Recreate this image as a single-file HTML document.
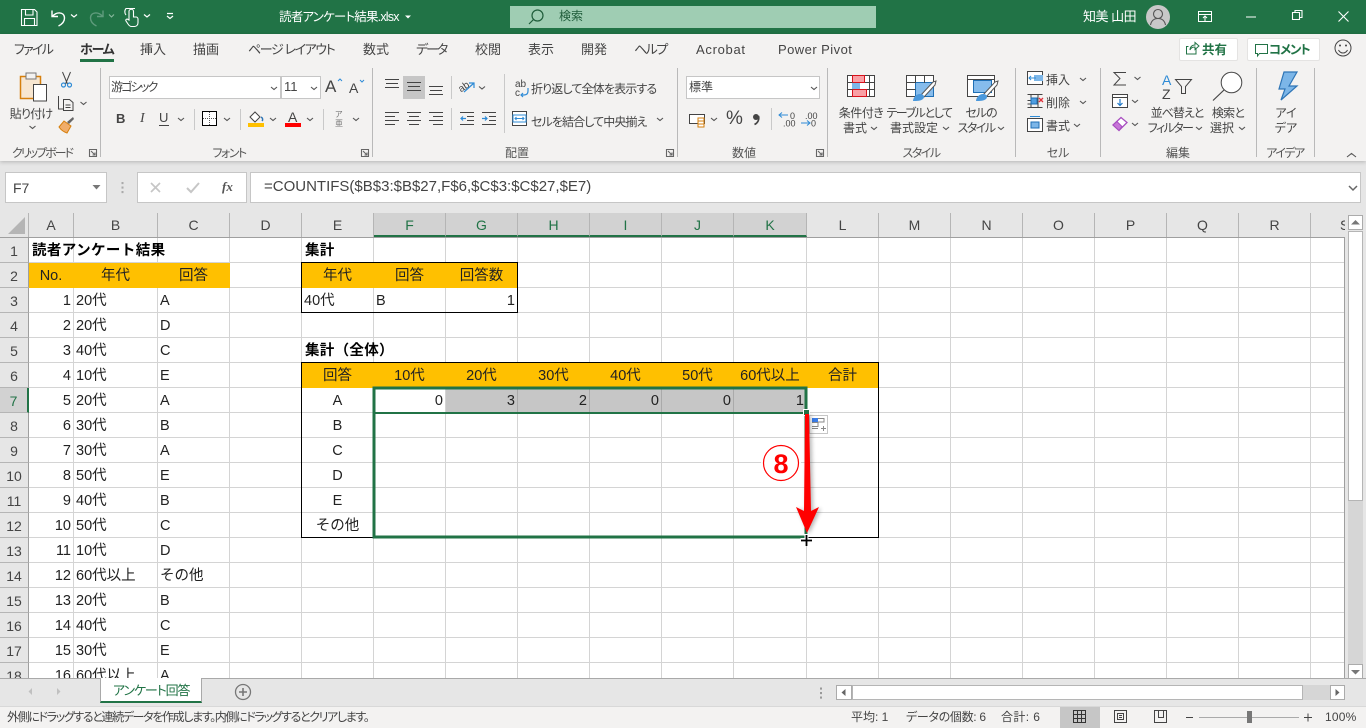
<!DOCTYPE html>
<html lang="ja"><head><meta charset="utf-8"><title>読者アンケート結果.xlsx</title>
<style>
*{box-sizing:border-box;margin:0;padding:0}
html,body{width:1366px;height:728px;overflow:hidden;background:#e6e6e6}
body{position:relative;font-family:"Liberation Sans","Noto Sans CJK JP",sans-serif;color:#444}
.a{position:absolute}
.t{position:absolute;white-space:nowrap;font-size:12px;line-height:16px;font-feature-settings:"palt";color:#444}
.m{text-align:center;transform:translateX(-50%)}
.w{color:#fff}
.tab{font-size:13px;top:42px}
.lab{top:145px;font-size:12px;color:#555}
.rl{font-size:12px;line-height:15px;text-align:center;transform:translateX(-50%)}
.ch{position:absolute;top:213px;height:24px;font-size:14px;line-height:25px;text-align:center;color:#444;background:#e6e6e6;border-right:1px solid #b5b5b5}
.sel{background:#d2d2d2;border-bottom:2px solid #217346;color:#217346}
.rh{position:absolute;left:0;width:29px;height:25px;font-size:14px;line-height:27px;text-align:center;color:#444;background:#e6e6e6;border-bottom:1px solid #b5b5b5;border-right:1px solid #9f9f9f}
.c{position:absolute;height:24px;font-style:normal;font-size:14.5px;line-height:27px;white-space:nowrap;color:#222;padding:0 2px}
.R{text-align:right}.C{text-align:center;padding:0}.B{font-weight:700;color:#000}
.ca{left:29px;width:44px}.cb{left:74px;width:83px}.cc{left:158px;width:71px}
.ce{left:302px;width:71px}.cf{left:374px;width:71px}.cg{left:446px;width:71px}.ch2{left:518px;width:71px}
.ci{left:590px;width:71px}.cj{left:662px;width:71px}.ck{left:734px;width:72px}.cl{left:807px;width:71px}
.r1{top:238px}.r2{top:263px}.r3{top:288px}.r4{top:313px}.r5{top:338px}.r6{top:363px}.r7{top:388px}.r8{top:413px}.r9{top:438px}.r10{top:463px}.r11{top:488px}.r12{top:513px}.r13{top:538px}.r14{top:563px}.r15{top:588px}.r16{top:613px}.r17{top:638px}.r18{top:663px}
.st{top:709px;font-size:12px;color:#444}
</style></head><body>

<!-- title bar -->
<div class="a" style="left:0;top:0;width:1366px;height:34px;background:#217346"></div>
<div class="a" style="left:510px;top:6px;width:366px;height:22px;background:#9fcdb3"></div>
<span class="t" style="left:559px;top:8px;color:#1f5c3a;font-size:12px">検索</span>
<span class="t w" style="left:279px;top:9px;font-size:12.5px;color:#fff;letter-spacing:-.8px">読者アンケート結果.xlsx</span>
<span class="t" style="left:1083px;top:9px;color:#fff;font-size:13px;letter-spacing:-.5px">知美 山田</span>

<!-- ribbon -->
<div class="a" style="left:0;top:34px;width:1366px;height:127px;background:#f3f2f1;box-shadow:0 1px 4px rgba(0,0,0,.22)"></div>
<span class="t tab" style="left:14px;letter-spacing:-1.7px">ファイル</span>
<span class="t tab" style="left:80px;font-weight:700;color:#333;letter-spacing:-1.2px">ホーム</span>
<span class="t tab" style="left:140px">挿入</span>
<span class="t tab" style="left:193px">描画</span>
<span class="t tab" style="left:248px;letter-spacing:-1.4px">ページ レイアウト</span>
<span class="t tab" style="left:363px">数式</span>
<span class="t tab" style="left:416px;letter-spacing:-2px">データ</span>
<span class="t tab" style="left:475px">校閲</span>
<span class="t tab" style="left:528px">表示</span>
<span class="t tab" style="left:581px">開発</span>
<span class="t tab" style="left:634px;letter-spacing:-1.5px">ヘルプ</span>
<span class="t tab" style="left:696px;letter-spacing:.7px">Acrobat</span>
<span class="t tab" style="left:778px;letter-spacing:.45px">Power Pivot</span>
<div class="a" style="left:80px;top:59px;width:34px;height:3px;background:#217346"></div>

<div class="a" style="left:1179px;top:38px;width:59px;height:23px;background:#fff;border:1px solid #e4e3e2;border-radius:2px"></div>
<span class="t" style="left:1202px;top:42px;font-weight:700;color:#217346;font-size:12.5px">共有</span>
<div class="a" style="left:1247px;top:38px;width:73px;height:23px;background:#fff;border:1px solid #e4e3e2;border-radius:2px"></div>
<span class="t" style="left:1269px;top:42px;font-weight:700;color:#217346;font-size:12.5px;letter-spacing:-1.2px">コメント</span>

<!-- font boxes -->
<div class="a" style="left:109px;top:76px;width:172px;height:23px;background:#fff;border:1px solid #c6c6c6"></div>
<div class="a" style="left:281px;top:76px;width:40px;height:23px;background:#fff;border:1px solid #c6c6c6"></div>
<span class="t" style="left:111px;top:79px;font-size:12px;color:#444;letter-spacing:-1.8px">游ゴシック</span>
<span class="t" style="left:284px;top:79px;font-size:13px;color:#444">11</span>
<div class="a" style="left:403px;top:76px;width:22px;height:23px;background:#c6c6c6"></div>
<div class="a" style="left:686px;top:76px;width:134px;height:23px;background:#fff;border:1px solid #c6c6c6"></div>
<span class="t" style="left:689px;top:79px;font-size:12px">標準</span>

<span class="t" style="left:116px;top:111px;font-weight:700;font-size:13px;color:#444">B</span>
<span class="t" style="left:140px;top:111px;font-style:italic;font-family:'Liberation Serif',serif;font-size:14px;color:#444">I</span>
<span class="t" style="left:159px;top:110px;font-size:13px;color:#444">U</span>
<span class="t" style="left:288px;top:109px;font-size:14px;color:#444">A</span>
<span class="t" style="left:325px;top:77px;font-size:17px;line-height:20px;color:#444">A</span>
<span class="t" style="left:349px;top:80px;font-size:14px;color:#444">A</span>
<span class="t" style="left:335px;top:110px;font-size:8px;line-height:9px;color:#777">ア<br>亜</span>
<span class="t" style="left:726px;top:109px;font-size:19px;line-height:20px;color:#444">%</span>
<span class="t" style="left:531px;top:81px;font-size:12px;letter-spacing:-.85px">折り返して全体を表示する</span>
<span class="t" style="left:531px;top:114px;font-size:12px;letter-spacing:-.9px">セルを結合して中央揃え</span>
<span class="t" style="left:1046px;top:72px;font-size:12px">挿入</span>
<span class="t" style="left:1046px;top:95px;font-size:12px">削除</span>
<span class="t" style="left:1046px;top:118px;font-size:12px">書式</span>

<span class="t rl" style="left:31px;top:107px;letter-spacing:-.8px">貼り付け</span>
<span class="t rl" style="left:861px;top:106px;letter-spacing:-.5px">条件付き</span>
<span class="t rl" style="left:855px;top:121px">書式</span>
<span class="t rl" style="left:919px;top:106px;letter-spacing:-1.4px">テーブルとして</span>
<span class="t rl" style="left:914px;top:121px">書式設定</span>
<span class="t rl" style="left:981px;top:106px;letter-spacing:-1px">セルの</span>
<span class="t rl" style="left:976px;top:121px;letter-spacing:-1.5px">スタイル</span>
<span class="t rl" style="left:1177px;top:106px;letter-spacing:-1px">並べ替えと</span>
<span class="t rl" style="left:1170px;top:121px;letter-spacing:-1.6px">フィルター</span>
<span class="t rl" style="left:1228px;top:106px;letter-spacing:-.8px">検索と</span>
<span class="t rl" style="left:1222px;top:121px">選択</span>
<span class="t rl" style="left:1286px;top:106px">アイ</span>
<span class="t rl" style="left:1286px;top:121px">デア</span>

<span class="t lab m" style="left:42px;letter-spacing:-2px">クリップボード</span>
<span class="t lab m" style="left:229px;letter-spacing:-1.5px">フォント</span>
<span class="t lab m" style="left:517px">配置</span>
<span class="t lab m" style="left:744px">数値</span>
<span class="t lab m" style="left:921px;letter-spacing:-1.5px">スタイル</span>
<span class="t lab m" style="left:1058px">セル</span>
<span class="t lab m" style="left:1178px">編集</span>
<span class="t lab m" style="left:1285px;letter-spacing:-1.5px">アイデア</span>

<!-- formula bar -->
<div class="a" style="left:5px;top:172px;width:102px;height:31px;background:#fff;border:1px solid #c6c6c6"></div>
<span class="t" style="left:13px;top:180px;font-size:14px;color:#444">F7</span>
<div class="a" style="left:137px;top:172px;width:110px;height:31px;background:#fff;border:1px solid #c6c6c6"></div>
<div class="a" style="left:250px;top:172px;width:1111px;height:31px;background:#fff;border:1px solid #c6c6c6"></div>
<span class="t" style="left:222px;top:179px;font-family:'Liberation Serif',serif;font-style:italic;font-weight:700;font-size:13px;color:#555">fx</span>
<span class="t" style="left:264px;top:179px;font-size:15px;color:#444">=COUNTIFS($B$3:$B$27,F$6,$C$3:$C$27,$E7)</span>

<!-- headers -->
<div class="ch" style="left:0;width:29px"></div>
<div class="ch" style="left:29px;width:45px">A</div>
<div class="ch" style="left:74px;width:84px">B</div>
<div class="ch" style="left:158px;width:72px">C</div>
<div class="ch" style="left:230px;width:72px">D</div>
<div class="ch" style="left:302px;width:72px">E</div>
<div class="ch sel" style="left:374px;width:72px">F</div>
<div class="ch sel" style="left:446px;width:72px">G</div>
<div class="ch sel" style="left:518px;width:72px">H</div>
<div class="ch sel" style="left:590px;width:72px">I</div>
<div class="ch sel" style="left:662px;width:72px">J</div>
<div class="ch sel" style="left:734px;width:73px">K</div>
<div class="ch" style="left:807px;width:72px">L</div>
<div class="ch" style="left:879px;width:72px">M</div>
<div class="ch" style="left:951px;width:72px">N</div>
<div class="ch" style="left:1023px;width:72px">O</div>
<div class="ch" style="left:1095px;width:72px">P</div>
<div class="ch" style="left:1167px;width:72px">Q</div>
<div class="ch" style="left:1239px;width:72px">R</div>
<div class="ch" style="left:1311px;width:34px;border-right:0;overflow:hidden;text-align:left;padding-left:29px">S</div>

<!-- grid -->
<div class="a" style="left:0;top:237px;width:1345px;height:441px;overflow:hidden;background:#fff;border-top:1px solid #9f9f9f;border-right:1px solid #9f9f9f">
<div class="rh" style="top:0">1</div><div class="rh" style="top:25px">2</div><div class="rh" style="top:50px">3</div><div class="rh" style="top:75px">4</div><div class="rh" style="top:100px">5</div><div class="rh" style="top:125px">6</div><div class="rh" style="top:150px;background:#d2d2d2;color:#217346;border-right:2px solid #217346">7</div><div class="rh" style="top:175px">8</div><div class="rh" style="top:200px">9</div><div class="rh" style="top:225px">10</div><div class="rh" style="top:250px">11</div><div class="rh" style="top:275px">12</div><div class="rh" style="top:300px">13</div><div class="rh" style="top:325px">14</div><div class="rh" style="top:350px">15</div><div class="rh" style="top:375px">16</div><div class="rh" style="top:400px">17</div><div class="rh" style="top:425px">18</div>
</div>
<svg class="a" style="left:0;top:0" width="1366" height="678" viewBox="0 0 1366 678">
<path fill="none" stroke="#d4d4d4" d="M29 262.500H1344M29 287.500H1344M29 312.500H1344M29 337.500H1344M29 362.500H1344M29 387.500H1344M29 412.500H1344M29 437.500H1344M29 462.500H1344M29 487.500H1344M29 512.500H1344M29 537.500H1344M29 562.500H1344M29 587.500H1344M29 612.500H1344M29 637.500H1344M29 662.500H1344M73.500 238V678M157.500 238V678M229.500 238V678M301.500 238V678M373.500 238V678M445.500 238V678M517.500 238V678M589.500 238V678M661.500 238V678M733.500 238V678M806.500 238V678M878.500 238V678M950.500 238V678M1022.500 238V678M1094.500 238V678M1166.500 238V678M1238.500 238V678M1310.500 238V678"/>
<rect x="29" y="263" width="201" height="25" fill="#ffc000"/>
<rect x="302" y="263" width="216" height="25" fill="#ffc000"/>
<rect x="302" y="363" width="577" height="25" fill="#ffc000"/>
<rect x="446" y="388" width="360" height="24" fill="#c6c6c6"/>
<path stroke="#aaa" d="M517.500 388V412M589.500 388V412M661.500 388V412M733.500 388V412"/>
<rect x="301.500" y="262.500" width="216" height="50" fill="none" stroke="#000"/>
<rect x="301.500" y="362.500" width="577" height="175" fill="none" stroke="#000"/>
</svg>

<i class="c ca r1 B" style="width:130px;font-size:14.5px;letter-spacing:.4px;padding-left:3px">読者アンケート結果</i>
<i class="c ca r2 C">No.</i><i class="c cb r2 C">年代</i><i class="c cc r2 C">回答</i>
<i class="c ca r3 R">1</i><i class="c cb r3">20代</i><i class="c cc r3">A</i>
<i class="c ca r4 R">2</i><i class="c cb r4">20代</i><i class="c cc r4">D</i>
<i class="c ca r5 R">3</i><i class="c cb r5">40代</i><i class="c cc r5">C</i>
<i class="c ca r6 R">4</i><i class="c cb r6">10代</i><i class="c cc r6">E</i>
<i class="c ca r7 R">5</i><i class="c cb r7">20代</i><i class="c cc r7">A</i>
<i class="c ca r8 R">6</i><i class="c cb r8">30代</i><i class="c cc r8">B</i>
<i class="c ca r9 R">7</i><i class="c cb r9">30代</i><i class="c cc r9">A</i>
<i class="c ca r10 R">8</i><i class="c cb r10">50代</i><i class="c cc r10">E</i>
<i class="c ca r11 R">9</i><i class="c cb r11">40代</i><i class="c cc r11">B</i>
<i class="c ca r12 R">10</i><i class="c cb r12">50代</i><i class="c cc r12">C</i>
<i class="c ca r13 R">11</i><i class="c cb r13">10代</i><i class="c cc r13">D</i>
<i class="c ca r14 R">12</i><i class="c cb r14">60代以上</i><i class="c cc r14">その他</i>
<i class="c ca r15 R">13</i><i class="c cb r15">20代</i><i class="c cc r15">B</i>
<i class="c ca r16 R">14</i><i class="c cb r16">40代</i><i class="c cc r16">C</i>
<i class="c ca r17 R">15</i><i class="c cb r17">30代</i><i class="c cc r17">E</i>
<i class="c ca r18 R" style="height:15px;overflow:hidden">16</i><i class="c cb r18" style="height:15px;overflow:hidden">60代以上</i><i class="c cc r18" style="height:15px;overflow:hidden">A</i>

<i class="c ce r1 B" style="width:60px;letter-spacing:.3px;padding-left:3px">集計</i>
<i class="c ce r2 C">年代</i><i class="c cf r2 C">回答</i><i class="c cg r2 C">回答数</i>
<i class="c ce r3">40代</i><i class="c cf r3">B</i><i class="c cg r3 R">1</i>
<i class="c ce r5 B" style="width:100px;letter-spacing:.3px;padding-left:3px">集計（全体）</i>
<i class="c ce r6 C">回答</i><i class="c cf r6 C">10代</i><i class="c cg r6 C">20代</i><i class="c ch2 r6 C">30代</i><i class="c ci r6 C">40代</i><i class="c cj r6 C">50代</i><i class="c ck r6 C">60代以上</i><i class="c cl r6 C">合計</i>
<i class="c ce r7 C">A</i><i class="c ce r8 C">B</i><i class="c ce r9 C">C</i><i class="c ce r10 C">D</i><i class="c ce r11 C">E</i><i class="c ce r12 C">その他</i>
<i class="c cf r7 R">0</i><i class="c cg r7 R">3</i><i class="c ch2 r7 R">2</i><i class="c ci r7 R">0</i><i class="c cj r7 R">0</i><i class="c ck r7 R">1</i>

<!-- tab bar -->
<div class="a" style="left:0;top:678px;width:1366px;height:28px;background:#e6e6e6;border-top:1px solid #a9a9a9"></div>
<div class="a" style="left:100px;top:678px;width:102px;height:25px;background:#fff;border-left:1px solid #a9a9a9;border-right:1px solid #a9a9a9;border-bottom:2px solid #217346"></div>
<span class="t" style="left:113px;top:683px;font-size:13px;color:#217346;letter-spacing:-1.1px">アンケート回答</span>
<div class="a" style="left:852px;top:685px;width:451px;height:15px;background:#fff;border:1px solid #b5b5b5"></div>
<div class="a" style="left:1303px;top:685px;width:27px;height:15px;background:#d6d6d6"></div>
<div class="a" style="left:836px;top:685px;width:16px;height:15px;background:#fff;border:1px solid #ababab"></div>
<div class="a" style="left:1330px;top:685px;width:15px;height:15px;background:#fff;border:1px solid #ababab"></div>
<!-- vertical scrollbar -->
<div class="a" style="left:1346px;top:213px;width:20px;height:465px;background:#e6e6e6"></div>
<div class="a" style="left:1348px;top:231px;width:15px;height:270px;background:#fff;border:1px solid #b5b5b5"></div>
<div class="a" style="left:1348px;top:501px;width:15px;height:163px;background:#d6d6d6"></div>
<div class="a" style="left:1348px;top:215px;width:15px;height:15px;background:#fff;border:1px solid #ababab"></div>
<div class="a" style="left:1348px;top:664px;width:15px;height:15px;background:#fff;border:1px solid #ababab"></div>

<!-- status bar -->
<div class="a" style="left:0;top:706px;width:1366px;height:22px;background:#f3f2f1;border-top:1px solid #d8d8d8"></div>
<div class="a" style="left:1060px;top:707px;width:40px;height:21px;background:#c6c6c6"></div>
<span class="t st" style="left:7px;letter-spacing:-1.35px">外側にドラッグすると連続データを作成します。内側にドラッグするとクリアします。</span>
<span class="t st" style="left:851px">平均: 1</span>
<span class="t st" style="left:906px;letter-spacing:-.3px">データの個数: 6</span>
<span class="t st" style="left:1001px;letter-spacing:.4px">合計: 6</span>
<span class="t st" style="left:1325px;letter-spacing:.2px">100%</span>

<!-- icons -->
<svg class="a" style="left:0;top:0;pointer-events:none" width="1366" height="728" viewBox="0 0 1366 728">
<g fill="none" stroke="#fff" stroke-width="1.100">
<path d="M21.500 9.500h13l2.500 2.500v13.500h-15.500zM25.500 9.500v5.500h7.500v-5.500M24.500 25.500v-7h10v7"/>
<path stroke-width="1.400" d="M52 10.500v6h6M52.500 16.500c3-5 12-5 12 1.500c0 3-2 6-6 8"/>
<path stroke="#5f9b7c" stroke-width="1.400" d="M103 10.500v6h-6M102.500 16.500c-3-5-12-5-12 1.500c0 3 2 6 6 8"/>
<path d="M129 20v-8.500a2.200 2.200 0 0 1 4.500 0v5.500h2.500a2 2 0 0 1 2 2v3.500c0 2.500-1.500 4-3.500 4h-3c-1.500 0-2.500-1-3.500-2.500l-2-3c-.8-1.500 1-2.500 2-1.500zM126 15a5 5 0 0 1 0-6.500h9"/>
<path stroke-width="1.200" d="M71 14.500l3 2.500l3-2.500M144 14.500l3 2.500l3-2.500M167 13.500h6M167 16l3 2.500l3-2.500"/>
<path stroke="#8aba9f" d="M109 14.500l2.500 2.500l2.500-2.500"/>
<path d="M1198.500 11.500h13v10h-13zM1198.500 14.500h13M1205 21v-4.500M1203 18l2-2l2 2" stroke-width="1"/>
<path d="M1246 17h10M1295 12.500v-2h7v7h-2M1292.500 12.500h7v7h-7zM1338.500 11.500l10 10M1348.500 11.500l-10 10"/>
</g>
<path d="M405 15.500h6l-3 3z" fill="#fff"/>
<circle cx="1158" cy="17" r="12" fill="#c8c8c8"/>
<g fill="none" stroke="#555" stroke-width="1.100"><circle cx="1158" cy="14" r="4.500"/><path d="M1150.500 25c1-5 4-6.500 7.500-6.500s6.500 1.500 7.500 6.500"/></g>
<g fill="none" stroke="#1f5c3a" stroke-width="1.200"><circle cx="537.500" cy="15.500" r="5.500"/><path d="M533.500 19.500l-4.500 4.500"/></g>

<!-- share/comment/smile -->
<g fill="none" stroke="#217346" stroke-width="1"><path d="M1196 48v6h-9.500v-7.500h2M1190 50c0-3 2-5 5-5v-2.500l4 3.500l-4 3.500v-2.500c-2 0-4 .5-5 3z"/><path d="M1255.500 44.500h12v9h-8l-2 2.500v-2.500h-2z"/></g>
<g fill="none" stroke="#444" stroke-width="1"><circle cx="1343" cy="48" r="8"/><path d="M1338.500 50c2 4 7 4 9 0"/></g><circle cx="1340" cy="45.500" r="1" fill="#444"/><circle cx="1346" cy="45.500" r="1" fill="#444"/>

<!-- separators -->
<path stroke="#b9b9b9" d="M100.500 68V157M372.500 68V157M677.500 68V157M827.500 68V157M1015.500 68V157M1100.500 68V157M1256.500 68V157M1314.500 68V157"/>
<path stroke="#c9c9c9" d="M194.500 109V130M240.500 109V130M323.500 109V130M451.500 76V99M451.500 108V130M504.500 74V133M771.500 108V130"/>

<!-- clipboard -->
<rect x="20.500" y="76.500" width="20" height="22" fill="#f7e6d0" stroke="#d67f0c" stroke-width="1.500"/>
<rect x="26" y="73" width="10" height="6" fill="#f3f2f1" stroke="#777"/>
<rect x="33.500" y="84.500" width="13" height="16.500" fill="#fff" stroke="#444"/>
<!-- scissors / copy / brush -->
<g fill="none" stroke="#444" stroke-width="1"><path d="M62.500 72l5 12M70.500 72l-5 12"/><path d="M58.500 96v13h5M63.500 99.500h6l3.500 3v8h-9.500zM65.500 105h5M65.500 107.500h5"/></g>
<g fill="none" stroke="#2e8bd6" stroke-width="1.200"><circle cx="63.500" cy="85" r="2"/><circle cx="69.500" cy="85" r="2"/></g>
<path d="M59 127l5-6l7 5l-4 7c-3-1-6-3-8-6z" fill="#f0ad6a" stroke="#d67f0c"/><path d="M67 122l6-5l1 2l-5 5z" fill="#666"/>

<!-- chevrons -->
<g fill="none" stroke="#555" stroke-width="1.100">
<path d="M29.500 126l3 2.500l3-2.500M80.500 102l3 2.500l3-2.500M271 87l3 2.500l3-2.500M311 87l3 2.500l3-2.500M178 118l3 2.500l3-2.500M224 118l3 2.500l3-2.500M270 118l3 2.500l3-2.500M307 118l3 2.500l3-2.500M353 118l3 2.500l3-2.500M479 86.500l3 2.500l3-2.500M657 118l3 2.500l3-2.500M811 87l3 2.500l3-2.500M711 118l3 2.500l3-2.500M1080 78l3 2.500l3-2.500M1080 101l3 2.500l3-2.500M1074 124l3 2.500l3-2.500M1134.500 77l3 2.500l3-2.500M1132 100l3 2.500l3-2.500M1132 123l3 2.500l3-2.500M871 127l3 2.500l3-2.500M943 127l3 2.500l3-2.500M998 127l3 2.500l3-2.500M1196 127l3 2.500l3-2.500M1239 127l3 2.500l3-2.500M1347 157l4.500-3.500l4.500 3.500"/>
<!-- launchers -->
<path stroke="#666" d="M89.500 149.500h7v7h-7zM361.500 149.500h7v7h-7zM666.500 149.500h7v7h-7zM816.500 149.500h7v7h-7z"/>
<path stroke="#666" d="M91 151l4 4M95 152.500v2.500h-2.500M363 151l4 4M367 152.500v2.500h-2.500M668 151l4 4M672 152.500v2.500h-2.500M818 151l4 4M822 152.500v2.500h-2.500"/>
</g>

<!-- A up/down -->
<path d="M338 81l2-2l2 2" fill="none" stroke="#2e8bd6"/><path d="M360 80l2 2l2-2" fill="none" stroke="#2e8bd6"/>
<!-- underline -->
<path stroke="#444" d="M159 125.500h10"/>
<!-- borders -->
<rect x="202.500" y="111.500" width="14" height="14" fill="#fff" stroke="#000"/><path stroke="#555" stroke-dasharray="1 1" d="M209.500 112v13M203 118.500h13"/>
<!-- fill color -->
<path d="M250 117l5-5l5 5l-5 5z" fill="#fff" stroke="#444"/><path d="M261 117c2 1 2 3 1 4" stroke="#2e75b6" fill="none" stroke-width="1.500"/>
<rect x="248" y="123" width="16" height="4" fill="#ffc000"/>
<rect x="285" y="123" width="16" height="4" fill="#f00"/>

<!-- align -->
<path stroke="#444" fill="none" d="M385 79.500h14M386 83.500h12M385 87.500h14M407 82.500h14M408 86.500h12M407 90.500h14M429 86.500h14M430 90.500h12M429 94.500h14M385 112.500h14M385 116.500h10M385 120.500h14M385 124.500h10M407 112.500h14M409 116.500h10M407 120.500h14M409 124.500h10M429 112.500h14M433 116.500h10M429 120.500h14M433 124.500h10"/>
<text x="459" y="90" font-family="Liberation Sans" font-size="10" fill="#444" transform="rotate(-35 464 88)">ab</text><path d="M464 92l10-9M469 83h5v5" stroke="#2e8bd6" fill="none" stroke-width="1.200"/>
<path stroke="#444" fill="none" d="M460 112.500h14M467 116.500h7M467 120.500h7M460 124.500h14M482 112.500h14M489 116.500h7M489 120.500h7M482 124.500h14"/>
<path stroke="#2e8bd6" fill="none" stroke-width="1.200" d="M466 118.500h-5M463 116.500l-2 2l2 2M482 118.500h5M485 116.500l2 2l-2 2"/>
<!-- wrap/merge -->
<text x="515" y="87" font-family="Liberation Sans" font-size="10" fill="#444">ab</text><text x="515" y="96" font-family="Liberation Sans" font-size="10" fill="#444">c</text>
<path d="M528 88v3c0 3-2 4-4 4h-3M523 93l-2 2l2 2" stroke="#2e8bd6" fill="none" stroke-width="1.200"/>
<rect x="512.500" y="111.500" width="14" height="14" fill="#fff" stroke="#444"/><rect x="513" y="115" width="13" height="7" fill="#fff" stroke="#2e8bd6"/><path d="M515 118.500h9M516.500 117l-1.500 1.500l1.500 1.500M522.500 117l1.500 1.500l-1.500 1.500" stroke="#2e8bd6" fill="none"/>
<!-- number -->
<path d="M689.500 114.500h15v9h-15z" fill="#fff" stroke="#444"/><rect x="698" y="118" width="6" height="9" fill="#fff" stroke="#d67f0c"/><path d="M698 121h6M698 124h6" stroke="#d67f0c"/>
<circle cx="756" cy="117" r="3" fill="#444"/><path d="M758.500 116c1 4-1 7-4 8.500" stroke="#444" stroke-width="1.700" fill="none"/>
<text x="790" y="119" font-family="Liberation Sans" font-size="9" fill="#444">0</text><text x="783" y="126.500" font-family="Liberation Sans" font-size="9" fill="#444">.00</text>
<text x="805" y="119" font-family="Liberation Sans" font-size="9" fill="#444">.00</text><text x="811" y="126.500" font-family="Liberation Sans" font-size="9" fill="#444">0</text>
<path d="M788 115h-9M782 112.500l-3 2.500l3 2.500M801 123h9M807 120.500l3 2.500l-3 2.500" stroke="#2e8bd6" fill="none"/>

<!-- cond format -->
<rect x="847.500" y="75.500" width="27" height="21" fill="#fff" stroke="#444"/>
<rect x="852.500" y="75.500" width="12" height="7" fill="#f9a0a5" stroke="#d8121b"/><rect x="852.500" y="89.500" width="14" height="7" fill="#f9a0a5" stroke="#d8121b"/><rect x="852" y="83" width="8" height="6" fill="#7cb6e8"/>
<path stroke="#444" fill="none" d="M869.500 76v21M847.500 82.500h5M847.500 89.500h5M865 82.500h9.500M867 89.500h7.500"/>
<!-- table format -->
<rect x="906.500" y="75.500" width="27" height="21" fill="#fff" stroke="#444"/><rect x="915.500" y="82.500" width="18" height="14" fill="#86bcec" stroke="#1f6fb5"/><path stroke="#444" fill="none" d="M915.500 76v7M924.500 76v7M906.500 82.500h9M906.500 89.500h9"/>
<path d="M921 95l12-13l3-1l-1 4l-11 12z" fill="#fff" stroke="#555"/><path d="M913 101c0-3 3-7 7-7s5 3 3 5c-2 2-6 2-10 2z" fill="#4a98dc"/>
<!-- cell styles -->
<rect x="967.500" y="75.500" width="27" height="21" fill="#fff" stroke="#444"/><path d="M967.500 79.500h27" stroke="#444"/><rect x="973.500" y="80.500" width="18" height="12" fill="#86bcec" stroke="#1f6fb5"/>
<path d="M983 95l12-13l3-1l-1 4l-11 12z" fill="#fff" stroke="#555"/><path d="M976 101c0-3 3-7 7-7s5 3 3 5c-2 2-6 2-10 2z" fill="#4a98dc"/>
<!-- cells icons -->
<rect x="1027.500" y="71.500" width="15" height="13" fill="#fff" stroke="#444"/><rect x="1034" y="75" width="9" height="6" fill="#7cb6e8"/><path d="M1036 78h-7M1031 76l-2 2l2 2" stroke="#2e8bd6" fill="none"/>
<path stroke="#444" fill="none" d="M1027.500 94.500h15M1027.500 107.500h15M1031 95v13M1038 95v13M1027.500 100.500h3M1027.500 104h3"/><rect x="1031" y="98" width="6" height="6" fill="#4f9ee0" stroke="#1f6fb5"/><path d="M1039 98l4 4M1043 98l-4 4" stroke="#e0313a" fill="none" stroke-width="1.300"/>
<rect x="1027.500" y="118.500" width="15" height="13" fill="#fff" stroke="#444"/><rect x="1031" y="122" width="8" height="6" fill="#7cb6e8" stroke="#1f6fb5"/><path d="M1030 116.500h10" stroke="#2e8bd6"/>
<!-- editing -->
<path d="M1126 72.500h-12l6 6l-6 6.500h12" fill="none" stroke="#444"/>
<rect x="1112.500" y="94.500" width="15" height="13" fill="#fff" stroke="#444"/><path d="M1112.500 97.500h15" stroke="#444"/><path d="M1120 99v6M1117.500 103l2.500 2.500l2.500-2.500" stroke="#1f78c8" fill="none" stroke-width="1.200"/>
<path d="M1113 125l8-7.500l6 5l-8 8z" fill="#fff" stroke="#a84ec0" stroke-width="1.300"/><path d="M1113 125l4-3.500l5 5l-3 4z" fill="#c775d8" stroke="#a84ec0"/>
<text x="1162" y="85" font-family="Liberation Sans" font-size="14" fill="#2e8bd6">A</text><text x="1162" y="99" font-family="Liberation Sans" font-size="14" fill="#444">Z</text>
<path d="M1175.500 79.500h16l-6 7v7h-4v-7z" fill="none" stroke="#444"/>
<circle cx="1231.500" cy="82.500" r="10.300" fill="#fff" stroke="#444"/><path d="M1224 90l-11 10.500" stroke="#444" fill="none" stroke-width="1.200"/>
<path d="M1284 72h13l-8 14h8l-16 14l4-11h-6z" fill="#7cb6e8" stroke="#2e75b6" stroke-width="1.200"/>

<!-- formula bar icons -->
<path d="M92.500 185h8l-4 4.500z" fill="#777"/>
<path d="M122.500 183v.1M122.500 187.500v.1M122.500 192v.1" stroke="#aaa" stroke-width="2" stroke-linecap="square" fill="none"/>
<path d="M151 183l9 9M160 183l-9 9" stroke="#c6c6c6" stroke-width="1.700" fill="none"/>
<path d="M187 188l4 4l8-9" stroke="#c6c6c6" stroke-width="2" fill="none"/>
<path d="M1349 186l4 4l4-4" stroke="#666" stroke-width="1.500" fill="none"/>
<!-- corner triangle -->
<path d="M25 217v17H8z" fill="#b5b5b5"/>
<!-- scroll arrows -->
<path d="M1351 224.500h9l-4.500-4.500zM1351 670h9l-4.500 4.500z" fill="#777"/>
<path d="M845.500 689v7l-4-3.500zM1335.500 689v7l4-3.500z" fill="#666"/>
<path d="M32 688v7l-3.500-3.500zM57 688v7l3.500-3.500z" fill="#c0c0c0"/>
<path d="M821 688.500v.1M821 693v.1M821 697.500v.1" stroke="#999" stroke-width="2" stroke-linecap="square" fill="none"/>
<circle cx="243" cy="692" r="7.500" fill="none" stroke="#777" stroke-width="1.300"/><path d="M243 688v8M239 692h8" stroke="#777" stroke-width="1.600"/>

<!-- status icons -->
<path stroke="#333" fill="none" d="M1073.500 710.500h12v12h-12zM1077.500 711v11M1081.500 711v11M1074 714.500h11M1074 718.500h11"/>
<path stroke="#444" fill="none" d="M1114.500 710.500h12v12h-12zM1117.500 713.500h6v6h-6zM1119 715.500h3M1119 717.500h3"/>
<path stroke="#444" fill="none" d="M1154.500 710.500h12v12h-12zM1158.500 711v6.500h5v-6.500"/>
<path stroke="#444" d="M1186 717.500h7M1304 717.500h8M1308 713.500v8"/>
<path stroke="#aaa" d="M1199 717.500h100"/><rect x="1247" y="711" width="5" height="12" fill="#777"/>

<!-- selection -->
<g fill="none" stroke="#217346">
<rect x="374" y="388" width="432" height="149" stroke-width="3"/>
<path stroke-width="2" d="M374 413H806"/>
</g>
<rect x="803.500" y="409.500" width="6" height="6" fill="#217346" stroke="#fff"/>
<!-- autofill -->
<rect x="809.500" y="415.500" width="18" height="18" fill="#fff" stroke="#c6c6c6"/>
<rect x="812" y="418" width="6" height="4" fill="#3b7de8"/><path d="M818 418.500h6v3.500h-6M812 422.500h6v4h-6" fill="none" stroke="#888"/><path d="M812 428.500h6M821 428.500h5M823.500 426v5" stroke="#888" fill="none"/>
<!-- arrow -->
<filter id="s" x="-30%" y="-10%" width="180%" height="120%"><feGaussianBlur stdDeviation="2"/></filter>
<path d="M805 414h4l2 97l8-4l-12 26l-11-26l8 4z" fill="#000" opacity=".3" filter="url(#s)" transform="translate(2,1)"/>
<path d="M805 414h4l2 97l8-4l-12 26l-11-26l8 4z" fill="#f00"/>
<!-- cursor -->
<path d="M806.500 534v12M800.500 540h12" stroke="#fff" stroke-width="4"/>
<path d="M806.500 535v11M801 540.500h11" stroke="#000" stroke-width="1.800"/>
<!-- circled 8 -->
<circle cx="781" cy="463" r="20" fill="#fff" opacity=".92"/>
<circle cx="781" cy="463" r="17.500" fill="#fff" stroke="#f00" stroke-width="1.200"/>
<text x="781" y="473" text-anchor="middle" font-family="Liberation Sans" font-weight="700" font-size="27" fill="#f00">8</text>
</svg>
</body></html>
